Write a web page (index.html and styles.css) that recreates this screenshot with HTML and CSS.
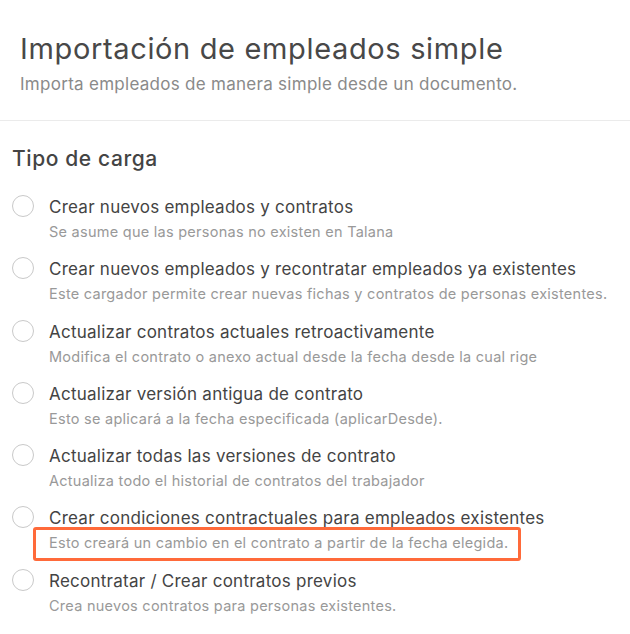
FILE: index.html
```html
<!DOCTYPE html>
<html lang="es">
<head>
<meta charset="utf-8">
<link rel="stylesheet" href="styles.css">
</head>
<body>
<header class="header">
  <h1 class="title">Importación de empleados simple</h1>
  <p class="subtitle">Importa empleados de manera simple desde un documento.</p>
</header>
<section class="section">
  <h2 class="heading">Tipo de carga</h2>
  <ul class="options">
    <li class="option">
      <span class="radio"></span>
      <div class="text">
        <div class="label">Crear nuevos empleados y contratos</div>
        <div class="desc">Se asume que las personas no existen en Talana</div>
      </div>
    </li>
    <li class="option">
      <span class="radio"></span>
      <div class="text">
        <div class="label">Crear nuevos empleados y recontratar empleados ya existentes</div>
        <div class="desc">Este cargador permite crear nuevas fichas y contratos de personas existentes.</div>
      </div>
    </li>
    <li class="option">
      <span class="radio"></span>
      <div class="text">
        <div class="label">Actualizar contratos actuales retroactivamente</div>
        <div class="desc">Modifica el contrato o anexo actual desde la fecha desde la cual rige</div>
      </div>
    </li>
    <li class="option">
      <span class="radio"></span>
      <div class="text">
        <div class="label">Actualizar versión antigua de contrato</div>
        <div class="desc">Esto se aplicará a la fecha especificada (aplicarDesde).</div>
      </div>
    </li>
    <li class="option">
      <span class="radio"></span>
      <div class="text">
        <div class="label">Actualizar todas las versiones de contrato</div>
        <div class="desc">Actualiza todo el historial de contratos del trabajador</div>
      </div>
    </li>
    <li class="option">
      <span class="radio"></span>
      <div class="text">
        <div class="label">Crear condiciones contractuales para empleados existentes</div>
        <div class="desc"><span class="highlight">Esto creará un cambio en el contrato a partir de la fecha elegida.</span></div>
      </div>
    </li>
    <li class="option">
      <span class="radio"></span>
      <div class="text">
        <div class="label">Recontratar / Crear contratos previos</div>
        <div class="desc">Crea nuevos contratos para personas existentes.</div>
      </div>
    </li>
  </ul>
</section>
</body>
</html>
```
FILE: styles.css
```css
* { box-sizing: border-box; }
html, body { margin: 0; padding: 0; background: #fff; }
body {
  font-family: Inter, "Noto Sans", "Liberation Sans", sans-serif;
  color: #444;
  width: 630px;
  overflow: hidden;
}
.header {
  padding: 32px 20px 25px 20px;
  border-bottom: 1px solid #ebebeb;
}
.title {
  margin: 0;
  font-size: 29px;
  line-height: 34px;
  letter-spacing: 0.65px;
  font-weight: 400;
  color: #484848;
}
.subtitle {
  margin: 7px 0 0 0;
  font-size: 17px;
  line-height: 22px;
  letter-spacing: 0.28px;
  color: #8a8a8a;
}
.section {
  padding: 25px 12px 0 12px;
}
.heading {
  margin: 0;
  font-size: 21px;
  line-height: 26px;
  letter-spacing: 0.6px;
  font-weight: 500;
  color: #444;
}
.options {
  list-style: none;
  margin: 23px 0 0 0;
  padding: 0;
  display: flex;
  flex-direction: column;
  gap: 15.3px;
}
.option {
  display: flex;
  gap: 15px;
  align-items: flex-start;
}
.radio {
  flex: none;
  width: 22px;
  height: 22px;
  border: 1.5px solid #c9c9c9;
  border-radius: 50%;
  background: #fff;
}
.text {
  display: flex;
  flex-direction: column;
  gap: 3px;
}
.label {
  font-size: 17px;
  line-height: 24px;
  letter-spacing: 0.25px;
  color: #444;
}
.desc {
  font-size: 14.5px;
  line-height: 20px;
  letter-spacing: 0.26px;
  color: #999;
}
.highlight {
  position: relative;
  display: inline-block;
}
.highlight::after {
  content: "";
  position: absolute;
  top: -6px;
  bottom: -8px;
  left: -16px;
  right: -13px;
  border: 3px solid #ff6a3a;
  border-radius: 3px;
}
```
